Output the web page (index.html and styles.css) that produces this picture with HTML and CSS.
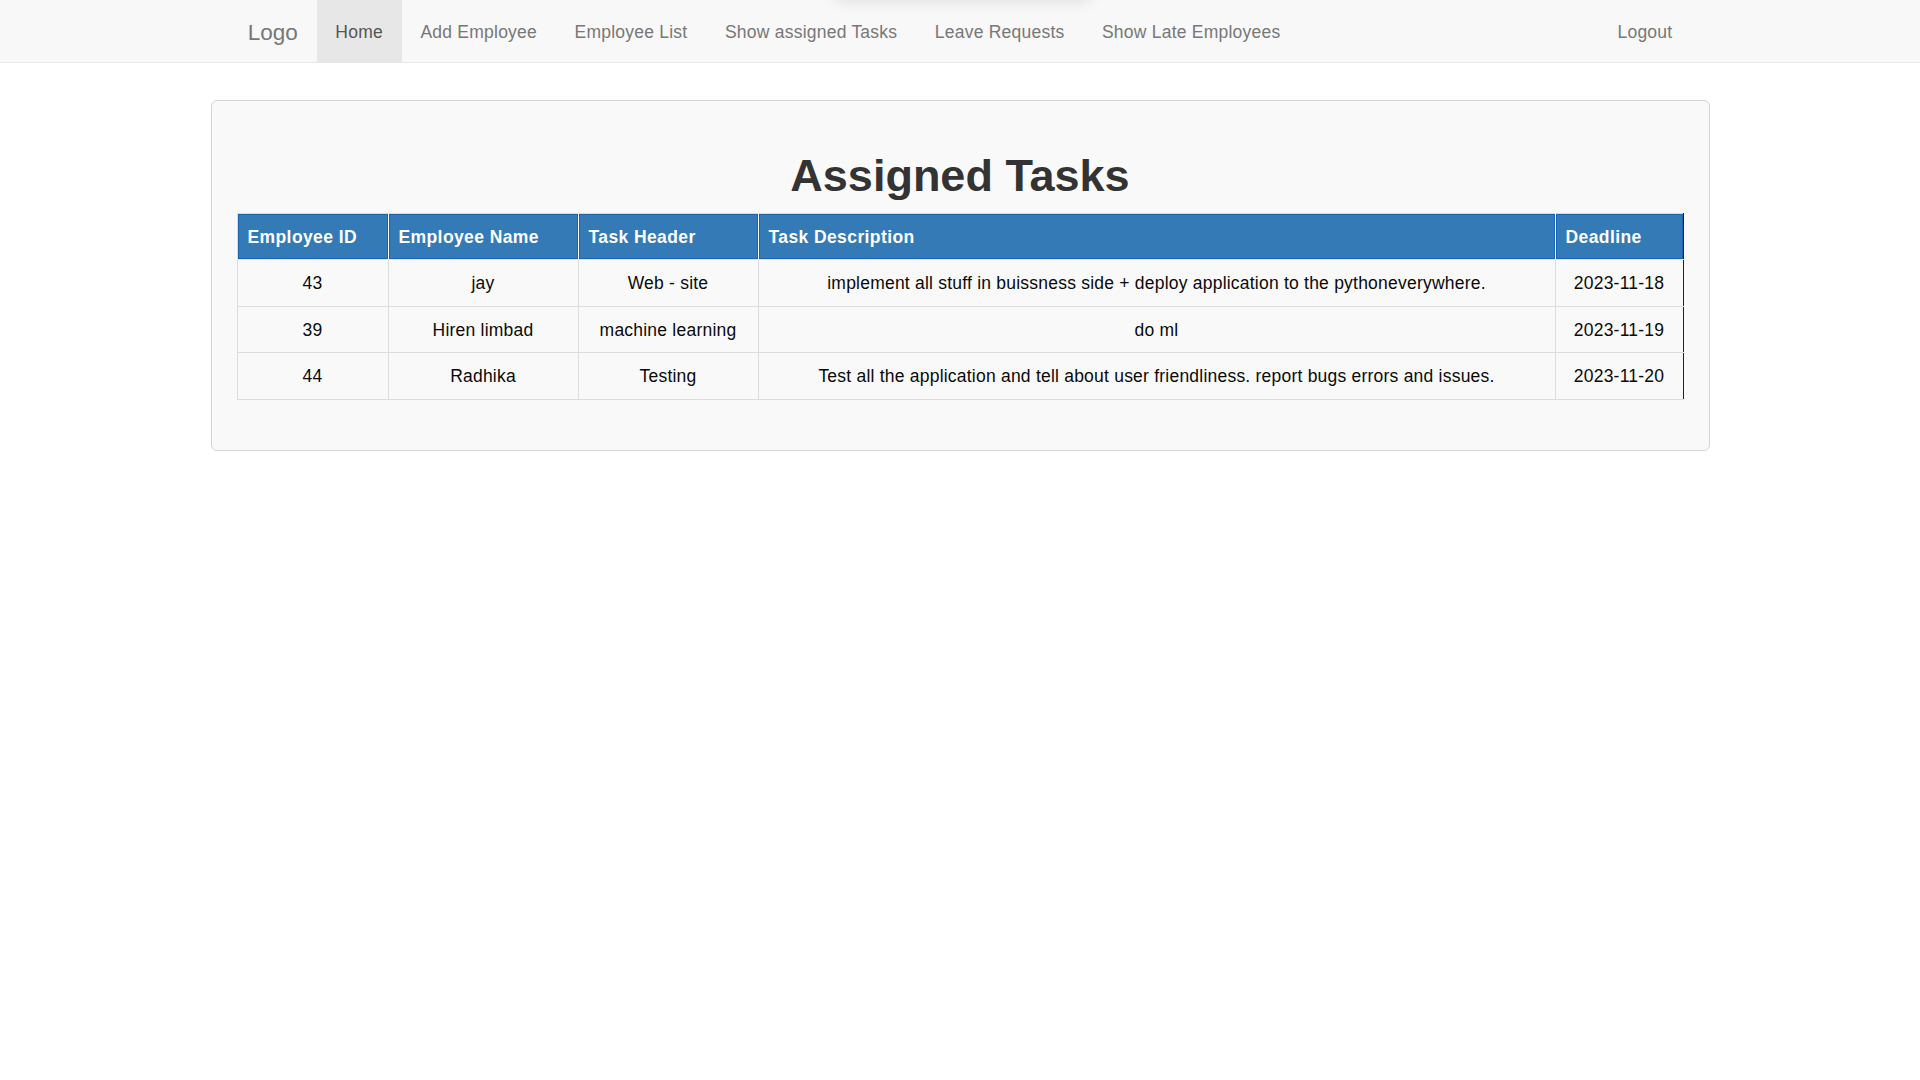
FILE: index.html
```html
<!DOCTYPE html>
<html lang="en">
<head>
<meta charset="utf-8">
<title>Assigned Tasks</title>
<link rel="stylesheet" href="styles.css">
</head>
<body>
<div class="top-shadow"></div>
<nav class="navbar">
  <div class="nav-container">
    <a class="brand" href="#">Logo</a>
    <ul class="nav">
      <li><a class="nav-link active" href="#">Home</a></li>
      <li><a class="nav-link" href="#">Add Employee</a></li>
      <li><a class="nav-link" href="#">Employee List</a></li>
      <li><a class="nav-link" href="#">Show assigned Tasks</a></li>
      <li><a class="nav-link" href="#">Leave Requests</a></li>
      <li><a class="nav-link" href="#">Show Late Employees</a></li>
    </ul>
    <ul class="nav nav-right">
      <li><a class="nav-link" href="#">Logout</a></li>
    </ul>
  </div>
</nav>
<main class="card">
  <h1 class="title">Assigned Tasks</h1>
  <table class="tasks">
    <colgroup>
      <col class="c-id"><col class="c-name"><col class="c-head"><col class="c-desc"><col class="c-date">
    </colgroup>
    <thead>
      <tr>
        <th>Employee ID</th>
        <th>Employee Name</th>
        <th>Task Header</th>
        <th>Task Description</th>
        <th class="last">Deadline</th>
      </tr>
    </thead>
    <tbody>
      <tr>
        <td>43</td>
        <td>jay</td>
        <td>Web - site</td>
        <td>implement all stuff in buissness side + deploy application to the pythoneverywhere.</td>
        <td class="last">2023-11-18</td>
      </tr>
      <tr>
        <td>39</td>
        <td>Hiren limbad</td>
        <td>machine learning</td>
        <td>do ml</td>
        <td class="last">2023-11-19</td>
      </tr>
      <tr>
        <td>44</td>
        <td>Radhika</td>
        <td>Testing</td>
        <td>Test all the application and tell about user friendliness. report bugs errors and issues.</td>
        <td class="last">2023-11-20</td>
      </tr>
    </tbody>
  </table>
</main>
</body>
</html>
```
FILE: styles.css
```css
html, body {
  margin: 0;
  padding: 0;
  background: #fff;
}
body {
  font-family: "Liberation Sans", Arial, Helvetica, sans-serif;
  font-size: 17.5px;
  line-height: 25px;
  color: #333;
  position: relative;
}
.top-shadow {
  position: absolute;
  top: -28px;
  left: 832px;
  width: 262px;
  height: 28px;
  border-radius: 14px;
  background: #f4f4f4;
  box-shadow: 0 3px 14px rgba(0, 0, 0, 0.09);
  z-index: 2;
}
.navbar {
  background: #f8f8f8;
  border-bottom: 1px solid #e7e7e7;
  height: 62px;
}
.nav-container {
  width: 1462px;
  margin: 0 auto;
  display: flex;
  height: 62px;
}
.brand {
  display: block;
  padding: 19.5px 18.75px 0;
  font-size: 22.5px;
  line-height: 25px;
  color: #777;
  text-decoration: none;
  height: 62px;
  box-sizing: border-box;
}
.nav {
  list-style: none;
  margin: 0;
  padding: 0;
  display: flex;
}
.nav-right {
  margin-left: auto;
}
.nav-link {
  display: block;
  padding: 19.75px 18.75px 0;
  height: 62px;
  box-sizing: border-box;
  line-height: 25px;
  font-size: 17.5px;
  letter-spacing: 0.23px;
  color: #777;
  text-decoration: none;
}
.nav-right .nav-link {
  letter-spacing: 0.2px;
}
.nav-link.active {
  background: #e7e7e7;
  color: #555;
}
.card {
  display: block;
  width: 1499px;
  box-sizing: border-box;
  margin: 37px auto 0;
  padding: 25px;
  background: #f9f9f9;
  border: 1px solid #d4d4d4;
  border-radius: 6px;
}
.title {
  margin: 25px 0 12.5px;
  font-size: 45px;
  line-height: 49.5px;
  font-weight: bold;
  color: #333;
  text-align: center;
}
.tasks {
  width: 100%;
  border-collapse: collapse;
  table-layout: fixed;
  margin-bottom: 25px;
}
.c-id { width: 151px; }
.c-name { width: 190px; }
.c-head { width: 180px; }
.c-desc { width: 797px; }
.c-date { width: 128px; }
.tasks th {
  background: #337ab7;
  color: #fff;
  font-weight: bold;
  text-align: left;
  padding: 11px 10px 9px;
  line-height: 25px;
  letter-spacing: 0.4px;
  border-top: 1px solid #dcdcdc;
  border-bottom: 1px solid #e4e4e4;
  border-left: 1px solid #fff;
  border-right: 1px solid #fff;
  box-shadow: inset 0 0 0 1px #1c63b2;
  white-space: nowrap;
}
.tasks th:first-child {
  border-left: 1px solid #dcdcdc;
}
.tasks td {
  padding: 11px 10px 9px;
  line-height: 25.5px;
  letter-spacing: 0.22px;
  text-align: center;
  color: #0a0a0a;
  border: 1px solid #dddddd;
}
.tasks th.last,
.tasks td.last {
  border-right: 1px solid #222;
}
```
